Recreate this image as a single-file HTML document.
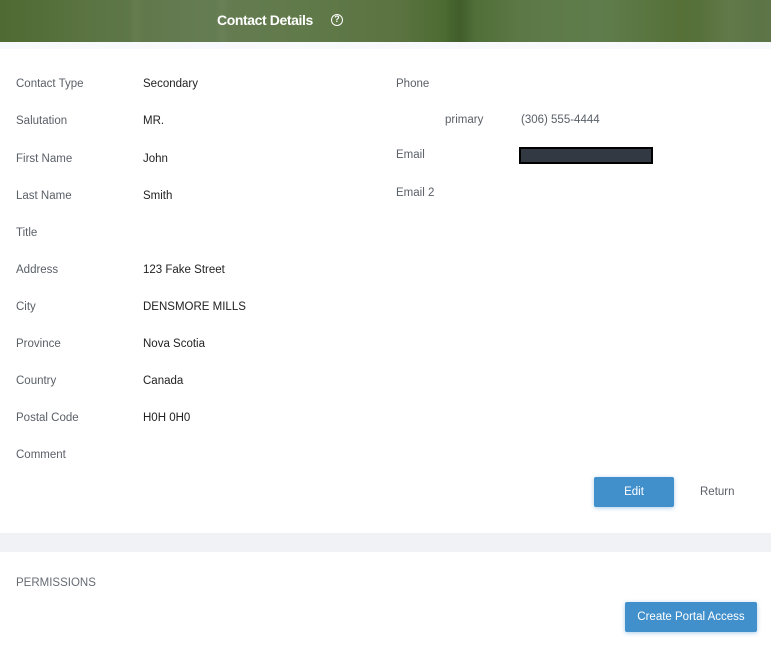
<!DOCTYPE html>
<html><head><meta charset="utf-8"><style>
*{margin:0;padding:0;box-sizing:border-box}
body{width:771px;height:647px;background:#fff;font-family:"Liberation Sans",sans-serif;position:relative;overflow:hidden}
.hdr{position:absolute;left:0;top:0;width:771px;height:42px;
background:
linear-gradient(90deg,rgba(0,0,0,0) 0,rgba(0,0,0,0) 130px,rgba(140,160,120,.12) 135px,rgba(0,0,0,0) 145px,rgba(0,0,0,0) 215px,rgba(140,160,120,.12) 222px,rgba(0,0,0,0) 230px,rgba(0,0,0,0) 445px,rgba(30,50,20,.25) 460px,rgba(0,0,0,0) 475px,rgba(0,0,0,0) 700px,rgba(150,170,130,.12) 730px,rgba(0,0,0,0) 760px),
linear-gradient(90deg,#4f6a32 0,#5c7544 100px,#657c53 200px,#617a4a 300px,#5b7340 400px,#4a6a30 450px,#5c7846 520px,#5f7d4c 600px,#567038 680px,#5d7548 771px)}
.ttl{position:absolute;left:217px;top:12px;color:#fff;font-weight:bold;font-size:14px;letter-spacing:-0.4px}
.q{position:absolute;left:331px;top:14px;width:12px;height:12px;border:1.5px solid #fff;border-radius:50%;color:#fff;font-size:9px;font-weight:bold;text-align:center;line-height:9px}
.band1{position:absolute;left:0;top:42px;width:771px;height:7px;background:#f8f9fd}
.band2{position:absolute;left:0;top:533px;width:771px;height:19px;background:#f1f2f6}
.t{position:absolute;font-size:11.5px;line-height:16px;white-space:nowrap}
.l{color:#5a6068}
.v{color:#222}
.red{position:absolute;left:519px;top:147px;width:134px;height:17px;background:#333943;border:2px solid #000}
.btn{position:absolute;background:#4190cc;color:#fff;font-size:11.5px;text-align:center;border-radius:2px;box-shadow:0 1px 4px rgba(65,144,204,.45)}
</style></head><body>
<div class="hdr"></div>
<div class="ttl">Contact Details</div>
<div class="q">?</div>
<div class="band1"></div>

<div class="t l" style="left:16px;top:76px">Contact Type</div><div class="t v" style="left:143px;top:76px">Secondary</div>
<div class="t l" style="left:16px;top:113px">Salutation</div><div class="t v" style="left:143px;top:113px">MR.</div>
<div class="t l" style="left:16px;top:151px">First Name</div><div class="t v" style="left:143px;top:151px">John</div>
<div class="t l" style="left:16px;top:188px">Last Name</div><div class="t v" style="left:143px;top:188px">Smith</div>
<div class="t l" style="left:16px;top:225px">Title</div>
<div class="t l" style="left:16px;top:262px">Address</div><div class="t v" style="left:143px;top:262px">123 Fake Street</div>
<div class="t l" style="left:16px;top:299px">City</div><div class="t v" style="left:143px;top:299px">DENSMORE MILLS</div>
<div class="t l" style="left:16px;top:336px">Province</div><div class="t v" style="left:143px;top:336px">Nova Scotia</div>
<div class="t l" style="left:16px;top:373px">Country</div><div class="t v" style="left:143px;top:373px">Canada</div>
<div class="t l" style="left:16px;top:410px">Postal Code</div><div class="t v" style="left:143px;top:410px">H0H 0H0</div>
<div class="t l" style="left:16px;top:447px">Comment</div>

<div class="t l" style="left:396px;top:76px">Phone</div>
<div class="t l" style="left:445px;top:112px">primary</div><div class="t l" style="left:521px;top:112px">(306) 555-4444</div>
<div class="t l" style="left:396px;top:147px">Email</div>
<div class="red"></div>
<div class="t l" style="left:396px;top:185px">Email 2</div>

<div class="btn" style="left:594px;top:477px;width:80px;height:30px;line-height:30px">Edit</div>
<div class="t l" style="left:700px;top:484px">Return</div>

<div class="band2"></div>
<div class="t l" style="left:16px;top:575px;color:#666c74">PERMISSIONS</div>
<div class="btn" style="left:625px;top:602px;width:132px;height:30px;line-height:30px">Create Portal Access</div>
</body></html>
